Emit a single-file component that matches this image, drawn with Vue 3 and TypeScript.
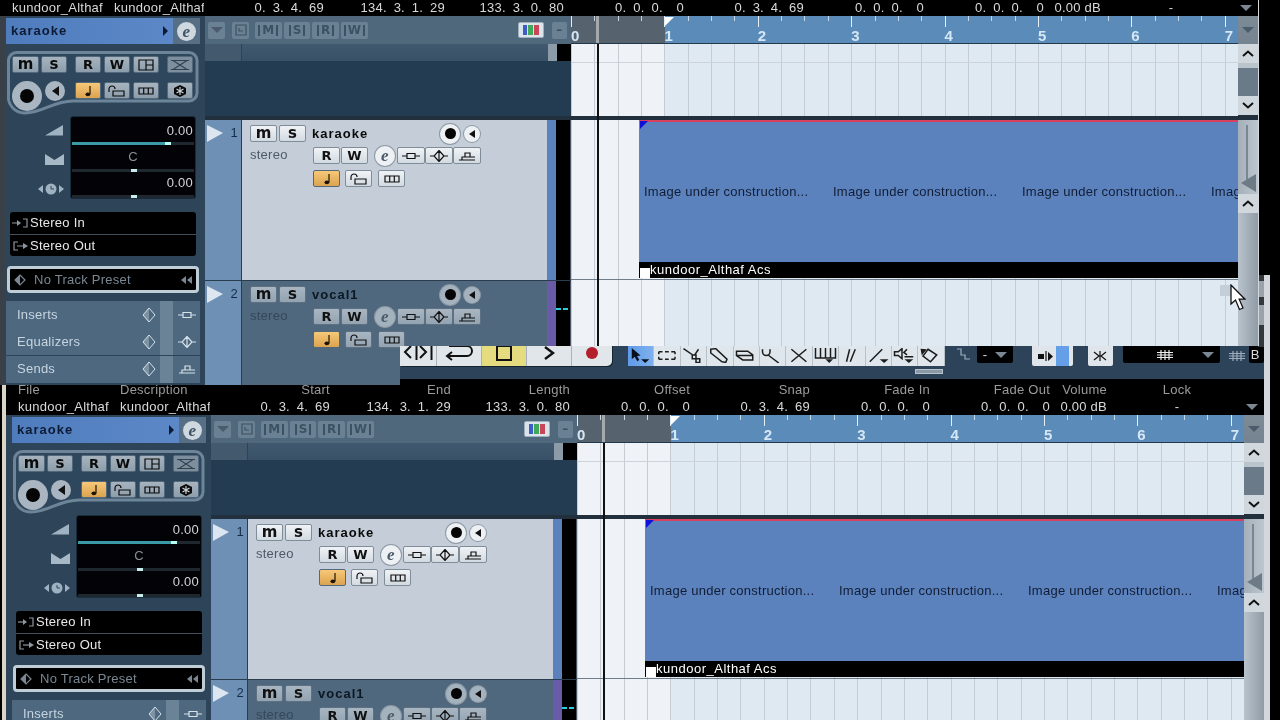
<script setup lang="ts">
import { h } from 'vue'

const ICONS: Record<string, string[]> = {
  note: ['M12 1V9', 'FM7.5 9.3a2.4 1.9 0 1 0 4.8 0a2.4 1.9 0 1 0-4.8 0z'],
  lock: ['M2 7V4a3 3 0 0 1 6 0', 'M6 6H17V11H6z'],
  lanes: ['M3 3H17V9H3zM7.7 3V9M12.3 3V9'],
  snow: ['FM10 0L16 3V9L10 12L4 9V3Z', 'WM10 2V10M6.5 4L13.5 8M13.5 4L6.5 8'],
  insert: ['M1 6H6M14 6H19M6 3.5H14V8.5H6z'],
  eq: ['M1 6H5M15 6H19M10 0.5L15 6L10 11.5L5 6ZM10 0.5V11.5'],
  send: ['M2 10H18M5 10V7H8V3H13V7H18M8 7H13'],
  split: ['M3 1H17V11H3zM10 1V11M10 6H17'],
  folder: ['M5 1H15V11H5zM8 4V7H12'],
  cross: ['M1 1.5H19M1 10.5H19M3 1.5L17 10.5M17 1.5L3 10.5'],
  diamond: ['M10 1L15 6L10 11L5 6Z', 'FM10 1L5 6L10 11Z'],
  input: ['M1 6H8', 'FM6 3L10 6L6 9Z', 'M12 2H16V10H12'],
  output: ['M7 2H3V10H7', 'M6 6H13', 'FM12 3L17 6L12 9Z'],
  rewind: ['FM10 2V10L5 6ZM16 2V10L11 6Z'],
  arrow: ['FM3 0L3 9L5.4 7L7.4 10.5L9 9.6L7.2 6.3L10 6Z', 'FM10.5 9H17L13.75 12Z'],
  range: ['M3 3H6M8 3H11M13 3H16M3 9H6M8 9H11M13 9H16M3 3V5M16 3V5M3 7V9M16 7V9'],
  scissors: ['M2 0.5L10 6M9 5.5H12V8.5H9zM12 8.5H15V11.5H12zM14 1L11 5.5'],
  glue: ['M3 1L7 0.5L16 9L15 11.5L12 11L3 4Z'],
  erase: ['M2 2.5H11L15 5.5V9.5H7L2 6ZM2 6H15'],
  zoom: ['M2 1V3a3 3 0 0 0 6 0V1M7 6L15 12'],
  cut: ['M3.5 1L15.5 11M15.5 1L3.5 11'],
  comb: ['M2 0V8H18V0M6 0V8M10 0V8M14 0V8', 'FM10 9H16L13 12Z'],
  pen: ['M6 11L8.5 1M9 11L13 1'],
  line: ['M3 11L13 1', 'FM11 9H18L14.5 12Z'],
  mute: ['M2 3H5L8 0.5V8.5L5 6H2Z', 'M12 1L9.5 3.5L12 5.5M10 7H17', 'FM10 9H17L13.5 12Z'],
  drum: ['M8 1L15 5.5L10 11L4 6.5Z', 'FM3 6L7 1L2 0.5Z'],
  snap: ['M2 1H6V7H10V11H15'],
  squeeze: ['FM2 4H8V9H2Z', 'M10 1V11', 'FM12 2L17 6.5L12 11Z'],
  merge: ['M4 2L9 6L4 10M16 2L11 6L16 10M10 1V11'],
  grid: ['M6 1V11M10 1V11M14 1V11M2 3.5H18M2 6H18M2 8.5H18'],
}

const Ico = (props: { n: string }) =>
  h(
    'svg',
    { viewBox: '0 0 20 12', width: 20, height: 12, fill: 'none', stroke: 'currentColor', 'stroke-width': 1.2, style: 'display:block;flex:none' },
    ICONS[props.n].map((d) =>
      d[0] === 'F'
        ? h('path', { d: d.slice(1), fill: 'currentColor', stroke: 'none' })
        : d[0] === 'W'
          ? h('path', { d: d.slice(1), stroke: '#c9d1d8' })
          : h('path', { d }),
    ),
  )
Ico.props = ['n']

const windows = ['back', 'front']
const fields = [
  { label: 'File', value: 'kundoor_Althaf', cls: 'left w-file' },
  { label: 'Description', value: 'kundoor_Althaf', cls: 'left w-desc' },
  { label: 'Start', value: '0. 3. 4. 69', cls: 'w-start' },
  { label: 'End', value: '134. 3. 1. 29', cls: 'w-end' },
  { label: 'Length', value: '133. 3. 0. 80', cls: 'w-len' },
  { label: 'Offset', value: '0. 0. 0.  0', cls: 'w-std' },
  { label: 'Snap', value: '0. 3. 4. 69', cls: 'w-std' },
  { label: 'Fade In', value: '0. 0. 0.  0', cls: 'w-std' },
  { label: 'Fade Out', value: '0. 0. 0.  0', cls: 'w-std' },
  { label: 'Volume', value: '0.00 dB', cls: 'w-vol' },
  { label: 'Lock', value: '-', cls: 'center w-lock' },
]
const tools = ['arrow', 'range', 'scissors', 'glue', 'erase', 'zoom', 'cut', 'comb', 'pen', 'line', 'mute', 'drum']
const tracks = [
  { n: 1, name: 'karaoke', on: true },
  { n: 2, name: 'vocal1', on: false },
]
const sections = [
  { name: 'Inserts', icon: 'insert' },
  { name: 'Equalizers', icon: 'eq' },
  { name: 'Sends', icon: 'send' },
]
const filters = ['M', 'S', 'R', 'W']
const bars = [0, 1, 2, 3, 4, 5, 6, 7]
const takes = [0, 1, 2, 3]
</script>

<template>
  <div class="desk">
    <section v-for="w in windows" :key="w" class="win" :class="w">
      <header class="toolbar">
        <div class="transport">
          <div class="tr nav">
            <svg width="32" height="16" viewBox="0 0 32 16" fill="none" stroke="#111" stroke-width="2"><path d="M9 1L3 7L9 13M14.5 0V15M18 1L24 7L18 13M29.5 0V15" /></svg>
          </div>
          <div class="tr loop">
            <svg width="32" height="16" viewBox="0 0 32 16" fill="none" stroke="#111" stroke-width="2"><path d="M6 1H24a5 5 0 0 1 0 10H5M9 7L4 11L9 15" /></svg>
          </div>
          <div class="tr stop"><i class="sq"></i></div>
          <div class="tr play"><svg width="12" height="14" viewBox="0 0 12 14" fill="none" stroke="#111" stroke-width="2.4"><path d="M2 1L10 7L2 13" /></svg></div>
          <div class="tr rec"><i class="dot"></i></div>
        </div>
        <div class="tools">
          <div v-for="(t, i) in tools" :key="t" class="tool" :class="{ sel: i === 0 }"><Ico :n="t" /></div>
          <i class="tools-tab"></i>
        </div>
        <div class="snap"><Ico n="snap" /></div>
        <div class="drop d1"><span>-</span><i class="tri"></i></div>
        <div class="lite g1"><Ico n="squeeze" /><b></b></div>
        <div class="lite g2"><Ico n="merge" /></div>
        <div class="drop d2"><Ico n="grid" /><i class="tri"></i></div>
        <div class="gridbtn"><Ico n="grid" /></div>
        <div class="drop d3">B</div>
        <div class="edge"><i></i><i></i></div>
      </header>

      <div class="info">
        <div v-for="f in fields" :key="f.label" class="cell" :class="f.cls">
          <div class="lab">{{ f.label }}</div>
          <div class="val">{{ f.value }}</div>
        </div>
        <i class="tri info-tri"></i>
      </div>

      <div class="main">
        <aside class="inspector">
          <div class="ins-head">
            <div class="ins-name"><b>karaoke</b><i class="head-tri"></i></div>
            <div class="e-zone"><span class="e-btn">e</span></div>
          </div>

          <div class="strip">
            <svg class="strip-bg" width="192" height="64" viewBox="0 0 192 64"><path d="M10 1.5H182a8 8 0 0 1 8 8V42a8 8 0 0 1-8 8H66C46 50 36 62 18 62A16 16 0 0 1 1.5 44V9.5a8 8 0 0 1 8-8Z" fill="#2f475d" stroke="#6d8599" stroke-width="3" /></svg>
            <div class="s-row r1">
              <button class="b g w27 low">m</button><button class="b g w26 ml2 low">s</button>
              <button class="b g w26 ml8">R</button><button class="b g w26 ml3">W</button>
              <button class="b g w26 ml3"><Ico n="split" /></button>
              <button class="b g faint w26 ml8"><Ico n="cross" /></button>
            </div>
            <div class="s-row r2">
              <span class="knob"><i></i></span>
              <span class="spk"><i></i></span>
              <button class="b o w26 ml10"><Ico n="note" /></button>
              <button class="b g w26 ml3"><Ico n="lock" /></button>
              <button class="b g w26 ml3"><Ico n="lanes" /></button>
              <button class="b g w26 ml8"><Ico n="snow" /></button>
            </div>
          </div>

          <div class="mix">
            <div class="mix-icons">
              <svg width="20" height="11" viewBox="0 0 20 11"><path d="M1 10.5L19 0V10.5Z" fill="#9fb2c2" /></svg>
              <svg width="19" height="11" viewBox="0 0 19 11"><path d="M0 0L9.5 6L19 0V11H0Z" fill="#a7b8c6" /></svg>
              <svg width="26" height="12" viewBox="0 0 26 12"><path d="M5 2V10L0 6ZM21 2V10L26 6Z" fill="#9fb2c2" /><circle cx="13" cy="6" r="5.5" fill="#9fb2c2" /><path d="M13 3V6H16" stroke="#2f475d" fill="none" /></svg>
            </div>
            <div class="meter">
              <div class="m-val v1">0.00</div>
              <div class="m-track"><i class="fill"></i></div>
              <div class="m-val c">C</div>
              <div class="m-track"><i class="thumb"></i></div>
              <div class="m-val v3">0.00</div>
              <div class="m-track"><i class="thumb"></i></div>
            </div>
          </div>

          <div class="routing">
            <div class="route"><Ico n="input" /><span>Stereo In</span></div>
            <div class="route"><Ico n="output" /><span>Stereo Out</span></div>
          </div>

          <div class="preset">
            <Ico n="diamond" />
            <span>No Track Preset</span>
            <Ico n="rewind" />
          </div>

          <div v-for="s in sections" :key="s.name" class="sec">
            <span class="sec-name">{{ s.name }}</span>
            <svg width="14" height="16" viewBox="0 0 14 16"><path d="M7 1L13 8L7 15L1 8Z" fill="none" stroke="#d7e1e9" /><path d="M7 1L1 8L7 15Z" fill="#d7e1e9" opacity=".35" /></svg>
            <i class="sec-band"></i>
            <span class="sec-ico"><Ico :n="s.icon" /></span>
          </div>
        </aside>

        <div class="tracklist">
          <div class="tl-bar">
            <button class="mb sq-b"><i class="tri dark"></i></button>
            <button class="mb sq-b ml7"><Ico n="folder" /></button>
            <button v-for="(f, i) in filters" :key="f" class="mb flt" :class="i === 0 ? 'ml6' : 'ml2'"><span>{{ f }}</span></button>
            <button class="color"><i></i><i></i><i></i></button>
            <button class="mb minus">–</button>
          </div>
          <div class="tl-sub">
            <div class="tl-sub-a"></div><div class="tl-sub-b"></div><div class="tl-thumb"></div><div class="tl-black"></div>
          </div>
          <div class="tl-empty"></div>
          <div class="band"></div>
          <div v-for="t in tracks" :key="t.n" class="track" :class="{ on: t.on }">
            <div class="t-num">
              <svg width="16" height="17" viewBox="0 0 16 17"><path d="M0 0L16 8L0 17Z" fill="#dbe6f0" /></svg>
              <span>{{ t.n }}</span>
            </div>
            <div class="t-body">
              <div class="t-row">
                <button class="b t w27 low">m</button><button class="b t w27 ml2 low">s</button>
                <b class="t-name">{{ t.name }}</b>
                <span class="knob small"><i></i></span>
                <span class="spk small"><i></i></span>
              </div>
              <div class="t-row r-b">
                <span class="t-kind">stereo</span>
                <button class="b t w27">R</button><button class="b t w27 ml1">W</button>
                <span class="e-btn t-e">e</span>
                <button class="b t w28"><Ico n="insert" /></button><button class="b t w28"><Ico n="eq" /></button><button class="b t w28"><Ico n="send" /></button>
              </div>
              <div class="t-row r-c">
                <button class="b o w27"><Ico n="note" /></button>
                <button class="b t w27 ml5"><Ico n="lock" /></button>
                <button class="b t w27 ml6"><Ico n="lanes" /></button>
              </div>
            </div>
            <div class="t-color"></div>
            <div class="t-meter"><i v-if="!t.on"></i></div>
            <div class="t-end"></div>
          </div>
        </div>

        <div class="arrange">
          <div class="ruler">
            <div class="ruler-nums"><span v-for="b in bars" :key="b">{{ b }}</span></div>
            <i class="locator"></i>
            <i class="marker"></i>
          </div>
          <div class="lane lane-top"></div>
          <div class="band"></div>
          <div class="lane lane-audio">
            <div class="event">
              <i class="flag"></i>
              <div class="wave"><span v-for="k in takes" :key="k">Image under construction...</span></div>
              <div class="ev-name"><i></i><span>kundoor_Althaf Acs</span></div>
            </div>
          </div>
          <div class="lane lane-rest"></div>
          <i class="playhead"></i>
        </div>

        <div class="vbar">
          <div class="vb-drop"><i class="tri dark"></i></div>
          <div class="vb-btn"><svg width="12" height="7" viewBox="0 0 12 7" fill="none" stroke="#111" stroke-width="2"><path d="M1 6L6 1.5L11 6" /></svg></div>
          <div class="vb-thumb"></div>
          <div class="vb-btn"><svg width="12" height="7" viewBox="0 0 12 7" fill="none" stroke="#111" stroke-width="2"><path d="M1 1L6 5.5L11 1" /></svg></div>
          <div class="vb-band"></div>
          <div class="vb-zoom">
            <i class="groove"></i>
            <svg class="zoom-tri" width="15" height="18" viewBox="0 0 15 18"><path d="M0 9L15 0V18Z" fill="#6d7b87" /></svg>
          </div>
          <div class="vb-btn"><svg width="12" height="7" viewBox="0 0 12 7" fill="none" stroke="#111" stroke-width="2"><path d="M1 6L6 1.5L11 6" /></svg></div>
          <div class="vb-rest"></div>
        </div>
      </div>
    </section>

    <i class="ghost"></i>
    <svg class="cursor" width="16" height="27" viewBox="0 0 16 27"><path d="M1 1V20L5.5 16L9.5 25.5L13 24L9.2 15.2H15Z" fill="#fff" stroke="#111" stroke-width="1.3" /></svg>
  </div>
</template>

<style>
html, body { margin: 0; background: #000; }
</style>

<style scoped>
.desk { position: relative; width: 1280px; height: 720px; overflow: hidden; background: #000; font: 13px/1.2 "Liberation Sans", Arial, sans-serif; letter-spacing: .25px; filter: blur(.4px); }
button { font: inherit; padding: 0; margin: 0; cursor: default; }
i { display: block; }

.win { position: absolute; width: 1264px; height: 520px; background: #2c4359; display: flex; flex-direction: column; overflow: hidden; }
.win::after { content: ""; position: absolute; top: 0; bottom: 0; background: #d4d8dc; }
.win.back { left: 6px; top: 275px; box-shadow: -4px 0 0 #d9d6c8; }
.win.back::after { right: 0; width: 6px; }
.win.front { left: 0; top: -124px; clip-path: polygon(0 0, 1259px 0, 1259px 470px, 400px 470px, 400px 509px, 0 509px); }
.win.front::after { right: 5px; width: 1px; }

/* toolbar */
.toolbar { position: relative; height: 104px; flex: none; box-sizing: border-box; padding: 0 0 13px 394px; display: flex; align-items: flex-end; background: #2c4359; }
.transport { display: flex; width: 212px; height: 34px; background: #e1e6ea; border-radius: 0 0 5px 0; box-shadow: 1px 1px 0 #16242f; }
.tr { display: flex; align-items: center; justify-content: center; padding-top: 8px; box-sizing: border-box; border-right: 1px solid #a9b2ba; color: #111; }
.nav { width: 37px; }
.loop { width: 45px; }
.stop { width: 45px; background: #e5dc80; }
.sq { width: 12px; height: 12px; border: 2px solid #111; }
.play { width: 45px; }
.rec { width: 40px; border: 0; padding-top: 7px; }
.dot { width: 12px; height: 12px; border-radius: 50%; background: #b3202c; }
.tools { position: relative; display: flex; margin-left: 16px; height: 34px; background: #dfe6ec; }
.tool { width: 26.4px; display: flex; align-items: center; justify-content: center; color: #1c1c1c; padding-top: 13px; box-sizing: border-box; border-right: 1px solid #b9c1c8; }
.tool svg { width: 25px; height: 15px; }
.tool.sel { background: linear-gradient(90deg, #5f9be8, #7fb0ee); color: #07101c; }
.tools-tab { position: absolute; right: 2px; bottom: -8px; width: 28px; height: 5px; background: #8a99a7; border: 1px solid #b7c2cb; box-sizing: border-box; }
.snap { width: 17px; margin-left: 10px; color: #9fb0bf; align-self: flex-end; padding-bottom: 6px; }
.drop { background: #000; color: #ddd; height: 17px; border-radius: 0 0 2px 2px; display: flex; align-items: center; justify-content: space-between; box-sizing: border-box; padding: 0 6px; margin-bottom: 3px; }
.d1 { width: 36px; margin-left: 5px; }
.d2 { width: 97px; margin-left: 10px; padding-left: 32px; color: #eee; }
.d3 { width: 15px; margin-left: 4px; padding: 0 2px; }
.lite { height: 20px; background: #dfe5ea; display: flex; align-items: center; justify-content: center; color: #111; border-radius: 0 0 2px 2px; }
.g1 { width: 41px; margin-left: 19px; }
.g1 b { width: 13px; height: 20px; background: #659fe8; flex: none; }
.g2 { width: 25px; margin-left: 15px; }
.gridbtn { width: 18px; margin-left: 7px; color: #9dadbb; padding-bottom: 4px; overflow: hidden; }
.edge { position: absolute; right: 6px; top: 0; width: 6px; height: 72px; background: #33383d; }
.edge i { height: 16px; margin-top: 6px; background: #9aa3aa; }
.edge i + i { height: 20px; margin-top: 8px; }
.tri { width: 0; height: 0; border-left: 6px solid transparent; border-right: 6px solid transparent; border-top: 6px solid #7b8893; }
.tri.dark { border-top-color: #4a5c6b; }

/* info */
.info { position: relative; height: 36px; flex: none; box-sizing: border-box; padding: 2px 0 0 12px; background: #000; display: flex; }
.cell { text-align: right; white-space: pre; overflow: hidden; line-height: 17px; flex: none; }
.lab { color: #9b9b9b; }
.val { color: #d9d9d9; word-spacing: 3px; }
.cell.left { text-align: left; }
.cell.center { text-align: center; }
.w-file { width: 102px; }
.w-desc { width: 90px; margin-right: 10px; }
.w-start { width: 110px; }
.w-end { width: 121px; }
.w-len { width: 119px; }
.w-std { width: 120px; }
.w-vol { width: 57px; }
.w-vol .val { word-spacing: 0; }
.w-lock { width: 140px; }
.info-tri { position: absolute; right: 12px; bottom: 5px; }

/* main */
.main { flex: 1; min-height: 0; display: flex; }
.inspector { width: 205px; flex: none; box-sizing: border-box; padding: 2px 5px 0 6px; background: #2d4459; }
.win.front .inspector { box-shadow: inset 5px 0 0 #3a4047; }
.ins-head { display: flex; height: 26px; }
.ins-name { width: 167px; display: flex; align-items: center; justify-content: space-between; box-sizing: border-box; padding: 0 5px 0 5px; background: linear-gradient(90deg, #4f7cbc, #5c88c8); color: #0c1a33; letter-spacing: 1px; }
.head-tri { border-left: 5px solid #0c1a33; border-top: 5px solid transparent; border-bottom: 5px solid transparent; }
.e-zone { width: 27px; background: #566f85; display: flex; align-items: center; justify-content: center; }
.e-btn { display: flex; align-items: center; justify-content: center; width: 19px; height: 19px; border-radius: 50%; background: #cfd8df; color: #3d5366; font: italic bold 17px/1 "Liberation Serif", serif; }

.strip { position: relative; width: 192px; height: 64px; margin: 7px 0 0 1px; }
.strip-bg { position: absolute; left: 0; top: 0; }
.s-row { position: relative; display: flex; padding-left: 5px; }
.r1 { padding-top: 5px; }
.r2 { margin-top: 9px; height: 16px; }
.b { height: 17px; box-sizing: border-box; border: 1px solid #53697b; border-radius: 2px; display: flex; align-items: center; justify-content: center; font-weight: 700; font-size: 13px; color: #0b0b0b; font-family: "DejaVu Sans", sans-serif; letter-spacing: 0; flex: none; overflow: hidden; }
.b.low { font-size: 15px; padding-bottom: 2px; }
.b.g { background: linear-gradient(#a7b4bf, #8c9dab); }
.b.faint { color: #33424f; background: #7d8f9e; }
.b.o { background: linear-gradient(#f6c878, #dba350); color: #1d1304; }
.b.t { background: linear-gradient(#f0f3f6, #d2dae1); color: #111; border-color: #7f8d99; }
.w26 { width: 26px; } .w27 { width: 27px; } .w28 { width: 28px; }
.ml1 { margin-left: 1px; } .ml2 { margin-left: 2px; } .ml3 { margin-left: 3px; } .ml5 { margin-left: 5px; } .ml6 { margin-left: 6px; } .ml7 { margin-left: 7px; } .ml8 { margin-left: 8px; } .ml10 { margin-left: 10px; }
.knob { width: 30px; height: 30px; margin: -1px 3px 0 0; flex: none; box-sizing: border-box; border-radius: 50%; background: #a9b6c1; display: flex; align-items: center; justify-content: center; }
.knob i { width: 14px; height: 14px; border-radius: 50%; background: #050505; }
.spk { width: 20px; height: 20px; flex: none; margin-top: -1px; border-radius: 50%; background: #a9b6c1; display: flex; align-items: center; justify-content: center; }
.spk i { border-right: 7px solid #111; border-top: 5px solid transparent; border-bottom: 5px solid transparent; }

.mix { display: flex; margin-top: 1px; height: 83px; }
.mix-icons { width: 64px; flex: none; box-sizing: border-box; padding: 9px 6px 0 0; display: flex; flex-direction: column; align-items: flex-end; gap: 18px; }
.meter { width: 126px; background: #020207; border-radius: 3px; border: 1px solid #1b2c3b; box-sizing: border-box; overflow: hidden; }
.m-val { height: 21px; line-height: 21px; text-align: right; padding-right: 2px; color: #d5d5d5; }
.m-val.v1 { height: 23px; line-height: 27px; }
.m-val.v3 { height: 20px; line-height: 20px; }
.m-val.c { text-align: center; color: #8a8f94; padding: 0; }
.m-track { position: relative; height: 3px; margin: 2px 1px 1px; background: #20282f; }
.fill { position: absolute; left: 0; top: 0; height: 3px; width: 99px; background: #3a9aa6; border-right: 6px solid #bfe; box-sizing: border-box; }
.thumb { position: absolute; left: 59px; top: 0; width: 6px; height: 3px; background: #c8ecee; }

.routing { margin: 13px 0 0 4px; width: 186px; height: 44px; background: #000; border-radius: 3px; color: #e8e8e8; display: flex; flex-direction: column; }
.route { flex: 1; display: flex; align-items: center; padding: 1px 0 0 1px; box-sizing: border-box; color: #8d97a0; }
.route span { color: #e8e8e8; margin-left: -1px; }
.route + .route { border-top: 1px solid #42505c; }
.preset { margin: 10px 0 0 1px; width: 192px; height: 27px; box-sizing: border-box; border: 3px solid #bfcdd7; border-radius: 4px; background: #000; color: #7a8792; display: flex; align-items: center; justify-content: space-between; }
.preset span { flex: 1; margin-left: 4px; }
.sec { display: flex; align-items: center; height: 27px; margin-bottom: .4px; background: #4d687f; color: #c7d5e0; }
.preset + .sec { margin-top: 8px; }
.sec-name { width: 136px; padding-left: 11px; box-sizing: border-box; }
.sec-band { width: 13px; height: 27px; background: #6b8397; margin-left: 4px; }
.sec-ico { margin-left: 4px; color: #d7e1e9; }

/* track list */
.tracklist { width: 366px; flex: none; display: flex; flex-direction: column; background: #243c52; }
.tl-bar { height: 28px; flex: none; display: flex; align-items: center; box-sizing: border-box; padding-left: 3px; background: #50687c; color: #3e5466; }
.mb { height: 17px; border: 0; background: #6a8193; color: #3c5263; border-radius: 2px; display: flex; align-items: center; justify-content: center; font-weight: 700; font-size: 12px; font-family: "DejaVu Sans", sans-serif; letter-spacing: 0; box-sizing: border-box; flex: none; }
.sq-b { width: 17px; overflow: hidden; }
.flt { width: 26.7px; }
.flt span { border-left: 2px solid #3c5263; border-right: 2px solid #3c5263; padding: 0 2px; line-height: 11px; }
.color { width: 26px; height: 16px; margin-left: 150px; border: 1px solid #9fb0be; border-radius: 2px; background: #dbe4eb; display: flex; padding: 2px 4px; box-sizing: border-box; gap: 1px; flex: none; }
.color i { flex: 1; background: #3e5cc6; }
.color i:nth-child(2) { background: #3fa85a; }
.color i:nth-child(3) { background: #c8455a; }
.minus { width: 15px; margin-left: 8px; }
.tl-sub { display: flex; height: 17px; flex: none; }
.tl-sub-a { width: 36px; background: #42596e; border-right: 1px solid #2c4359; }
.tl-sub-b { width: 306px; background: linear-gradient(#40596f, #385167); }
.tl-thumb { width: 9px; background: #8c9ba8; }
.tl-black { width: 14px; background: #000; }
.tl-empty { height: 55px; flex: none; }
.band { height: 4px; flex: none; background: #22303d; }
.track { display: flex; height: 160px; flex: none; border-bottom: 1px solid #2a3d4e; color: #111; }
.track + .track { flex: 1; border: 0; }
.t-num { width: 36px; flex: none; box-sizing: border-box; padding: 5px 3px 0 2px; background: #6f90b5; display: flex; justify-content: space-between; align-items: flex-start; color: #142c4a; }
.t-num span { line-height: 16px; }
.t-body { width: 306px; flex: none; box-sizing: border-box; padding: 5px 0 0 8px; background: #4f687d; border-left: 1px solid #2a3d4e; }
.track.on .t-body { background: #c5ced8; }
.t-row { display: flex; align-items: center; height: 17px; }
.t-name { margin-left: 6px; width: 128px; letter-spacing: 1px; color: #0a0a0a; }
.track:not(.on) .t-name { color: #0b1722; }
.track:not(.on) .b.t { background: linear-gradient(#a9b6c2, #93a3b1); border-color: #5d7183; }
.knob.small { width: 20px; height: 20px; margin: 0 4px 0 0; background: #eef1f4; box-shadow: 0 0 0 1px #8c99a5; }
.knob.small i { width: 11px; height: 11px; }
.spk.small { width: 16px; height: 16px; margin: 0; background: #eef1f4; box-shadow: 0 0 0 1px #8c99a5; }
.spk.small i { border-right-width: 6px; border-top-width: 4px; border-bottom-width: 4px; }
.track:not(.on) .knob.small, .track:not(.on) .spk.small { background: #a4b2be; }
.r-b { margin-top: 5px; }
.r-c { margin-top: 6px; padding-left: 63px; }
.t-kind { width: 63px; flex: none; color: #4d5966; align-self: flex-start; }
.track:not(.on) .t-kind { color: #33495c; }
.t-e { margin: 0 2px 0 7px; flex: none; width: 20px; height: 20px; background: #eef1f4; box-shadow: 0 0 0 1px #8c99a5; color: #4c5c6a; }
.track:not(.on) .t-e { background: #a4b2be; }
.t-color { width: 9px; flex: none; background: #5b82bd; }
.track:not(.on) .t-color { background: #6a5ba8; }
.t-meter { width: 14px; flex: none; background: #000; padding-top: 27px; box-sizing: border-box; }
.t-meter i { height: 2px; width: 12px; background: linear-gradient(90deg, #2ccfe0 45%, #000 45% 55%, #2ccfe0 55%); }
.t-end { width: 1px; background: #4a5561; }

/* arrange */
.arrange { position: relative; width: 667px; flex: none; display: flex; flex-direction: column; }
.ruler { position: relative; height: 28px; flex: none; box-sizing: border-box; border-bottom: 1px solid #24384b;
  background:
    repeating-linear-gradient(90deg, #e4eef6 0 1px, transparent 1px 93.4px) 0 0 / 100% 11px no-repeat,
    repeating-linear-gradient(90deg, #c6d8e8 0 1px, transparent 1px 23.35px) 0 0 / 100% 5px no-repeat,
    linear-gradient(90deg, #56636e 94px, #5b8bb9 94px); }
.ruler-nums { display: flex; padding: 12px 0 0 0; font: 700 15px/16px "Liberation Sans", sans-serif; color: #d5e6f5; }
.ruler-nums span { width: 93.4px; flex: none; box-sizing: border-box; }
.locator { position: absolute; left: 25px; top: 0; bottom: 0; width: 3px; background: #a6a9ab; }
.marker { position: absolute; left: 94px; top: 1px; border-top: 9px solid #fff; border-right: 9px solid transparent; }
.lane { background:
    repeating-linear-gradient(90deg, #c5ccd3 0 1px, transparent 1px 23.35px),
    linear-gradient(90deg, #eff3f8 94px, #dfe9f2 94px); }
.lane-top { height: 72px; flex: none; position: relative; }
.lane-top::before { content: ""; display: block; height: 18px; border-bottom: 1px solid #ccd3da; }
.lane-audio { height: 160px; flex: none; padding-left: 68px; box-sizing: border-box; border-bottom: 1px solid #6f7c89; }
.lane-rest { flex: 1; }
.event { position: relative; height: 158px; display: flex; flex-direction: column; overflow: hidden; background: #000; }
.flag { position: absolute; left: 1px; top: 1px; border-top: 8px solid #1010d8; border-right: 8px solid transparent; }
.wave { flex: 1; display: flex; align-items: center; box-sizing: border-box; padding-left: 4px; background: #5b82bd; border-top: 2px solid #d8405e; border-left: 1px solid #e8506a; color: #111d36; white-space: nowrap; overflow: hidden; }
.wave span { width: 189px; flex: none; }
.ev-name { height: 16px; position: relative; display: flex; align-items: center; color: #fff; padding-left: 11px; background: #000; box-sizing: border-box; letter-spacing: .5px; }
.ev-name i { position: absolute; left: 1px; bottom: 0; width: 10px; height: 10px; background: #fff; }
.playhead { position: absolute; left: 26px; top: 28px; bottom: 0; width: 2px; background: #111; }

/* scrollbar */
.vbar { width: 20px; flex: none; display: flex; flex-direction: column; background: #6f7f8d; }
.vb-drop { height: 28px; flex: none; display: flex; align-items: center; justify-content: center; background: linear-gradient(#7d8b97, #74838f); box-sizing: border-box; }
.vb-btn { height: 19px; flex: none; display: flex; align-items: center; justify-content: center; background: #d0d8de; box-sizing: border-box; }
.vb-thumb { height: 33px; flex: none; background: #6b7a88; border-top: 5px solid #b9c4cd; box-sizing: border-box; }
.vb-band { height: 5px; flex: none; background: #22303d; }
.vb-zoom { position: relative; height: 74px; flex: none; background: linear-gradient(90deg, #a4afb9, #bcc6ce); }
.groove { position: absolute; left: 8px; top: 5px; bottom: 10px; width: 2px; background: #7a8793; }
.zoom-tri { position: absolute; right: 2px; bottom: 2px; }
.vb-rest { flex: 1; background: linear-gradient(90deg, #b9c3cc, #8f9ba6); }

.ghost { position: absolute; left: 1220px; top: 285px; width: 12px; height: 11px; background: #c4ced8; }
.cursor { position: absolute; left: 1230px; top: 284px; }
</style>
